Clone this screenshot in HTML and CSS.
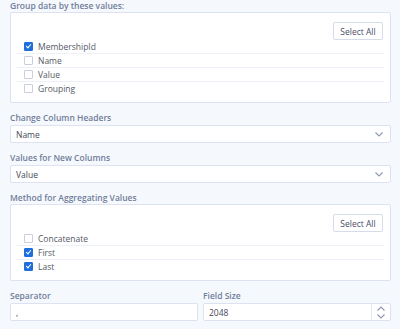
FILE: index.html
```html
<!DOCTYPE html>
<html>
<head>
<meta charset="utf-8">
<link rel="stylesheet" href="styles.css">
</head>
<body>
<div class="form">
  <div class="field">
    <div class="label">Group data by these values:</div>
    <div class="box">
      <div class="box-head"><button class="btn">Select All</button></div>
      <div class="list">
        <div class="row"><span class="cb checked"></span><span>MembershipId</span></div>
        <div class="row"><span class="cb"></span><span>Name</span></div>
        <div class="row"><span class="cb"></span><span>Value</span></div>
        <div class="row"><span class="cb"></span><span>Grouping</span></div>
      </div>
    </div>
  </div>
  <div class="field">
    <div class="label">Change Column Headers</div>
    <div class="select"><span>Name</span>
      <svg class="chev" width="8" height="5" viewBox="0 0 8 5"><path d="M0.5 0.5 L4 4 L7.5 0.5" fill="none" stroke="#8d97b3" stroke-width="1.1"/></svg>
    </div>
  </div>
  <div class="field">
    <div class="label">Values for New Columns</div>
    <div class="select"><span>Value</span>
      <svg class="chev" width="8" height="5" viewBox="0 0 8 5"><path d="M0.5 0.5 L4 4 L7.5 0.5" fill="none" stroke="#8d97b3" stroke-width="1.1"/></svg>
    </div>
  </div>
  <div class="field">
    <div class="label">Method for Aggregating Values</div>
    <div class="box">
      <div class="box-head"><button class="btn">Select All</button></div>
      <div class="list">
        <div class="row"><span class="cb"></span><span>Concatenate</span></div>
        <div class="row"><span class="cb checked"></span><span>First</span></div>
        <div class="row"><span class="cb checked"></span><span>Last</span></div>
      </div>
    </div>
  </div>
  <div class="field two">
    <div>
      <div class="label">Separator</div>
      <div class="input"><span>,</span></div>
    </div>
    <div>
      <div class="label">Field Size</div>
      <div class="input num"><span class="val">2048</span>
        <div class="spin">
          <svg width="8" height="5" viewBox="0 0 8 5"><path d="M0.5 4.5 L4 1 L7.5 4.5" fill="none" stroke="#8d97b3" stroke-width="1.1"/></svg>
          <svg width="8" height="5" viewBox="0 0 8 5"><path d="M0.5 0.5 L4 4 L7.5 0.5" fill="none" stroke="#8d97b3" stroke-width="1.1"/></svg>
        </div>
      </div>
    </div>
  </div>
</div>
</body>
</html>
```
FILE: styles.css
```css
html, body {
  margin: 0;
  padding: 0;
  background: #f5f8fd;
  font-family: "Open Sans", "Noto Sans", sans-serif;
}
.form {
  padding: 0 9px 0 10px;
  display: flex;
  flex-direction: column;
  gap: 9px;
}
.label {
  font-size: 8.5px;
  font-weight: 600;
  color: #717e99;
  line-height: 12px;
  height: 12px;
}
.box {
  background: #fff;
  border: 1px solid #dce2ef;
  border-radius: 2px;
  padding: 9px 6px 7px 6px;
}
.box-head {
  display: flex;
  justify-content: flex-end;
  padding-right: 1px;
}
.btn {
  width: 50px;
  height: 18px;
  background: #fff;
  border: 1px solid #d6dcea;
  border-radius: 2px;
  font-family: inherit;
  font-size: 8.5px;
  color: #4a4d68;
  padding: 0;
}
.list {
  display: flex;
  flex-direction: column;
}
.row {
  display: flex;
  align-items: center;
  gap: 5px;
  height: 13px;
  padding-left: 7px;
  font-size: 8.5px;
  color: #555a66;
  border-top: 1px solid #edf0f6;
}
.row:first-child {
  border-top: none;
}
.cb {
  width: 7px;
  height: 7px;
  border: 1px solid #c9cfdc;
  border-radius: 1px;
  background: #fff;
  flex: none;
  position: relative;
}
.cb.checked {
  background: #1e6fdc;
  border-color: #1e6fdc;
}
.cb.checked::after {
  content: "";
  position: absolute;
  left: 2px;
  top: 0px;
  width: 2px;
  height: 4px;
  border: solid #fff;
  border-width: 0 1.2px 1.2px 0;
  transform: rotate(40deg);
}
.select, .input {
  height: 16px;
  background: #fff;
  border: 1px solid #dce2ef;
  border-radius: 2px;
  display: flex;
  align-items: center;
  justify-content: space-between;
  padding: 0 7px 0 5px;
  font-size: 8.5px;
  color: #454956;
}
.select {
  margin-top: 1px;
}
.chev {
  display: block;
}
.two {
  display: grid;
  grid-template-columns: 1fr 1fr;
  column-gap: 5px;
}
.two .label {
  margin-bottom: 1px;
}
.input.num {
  padding-right: 0;
}
.spin {
  width: 18px;
  height: 100%;
  border-left: 1px solid #e3e7f0;
  display: flex;
  flex-direction: column;
  align-items: center;
  justify-content: center;
  gap: 3px;
}
.spin svg {
  display: block;
}
```
